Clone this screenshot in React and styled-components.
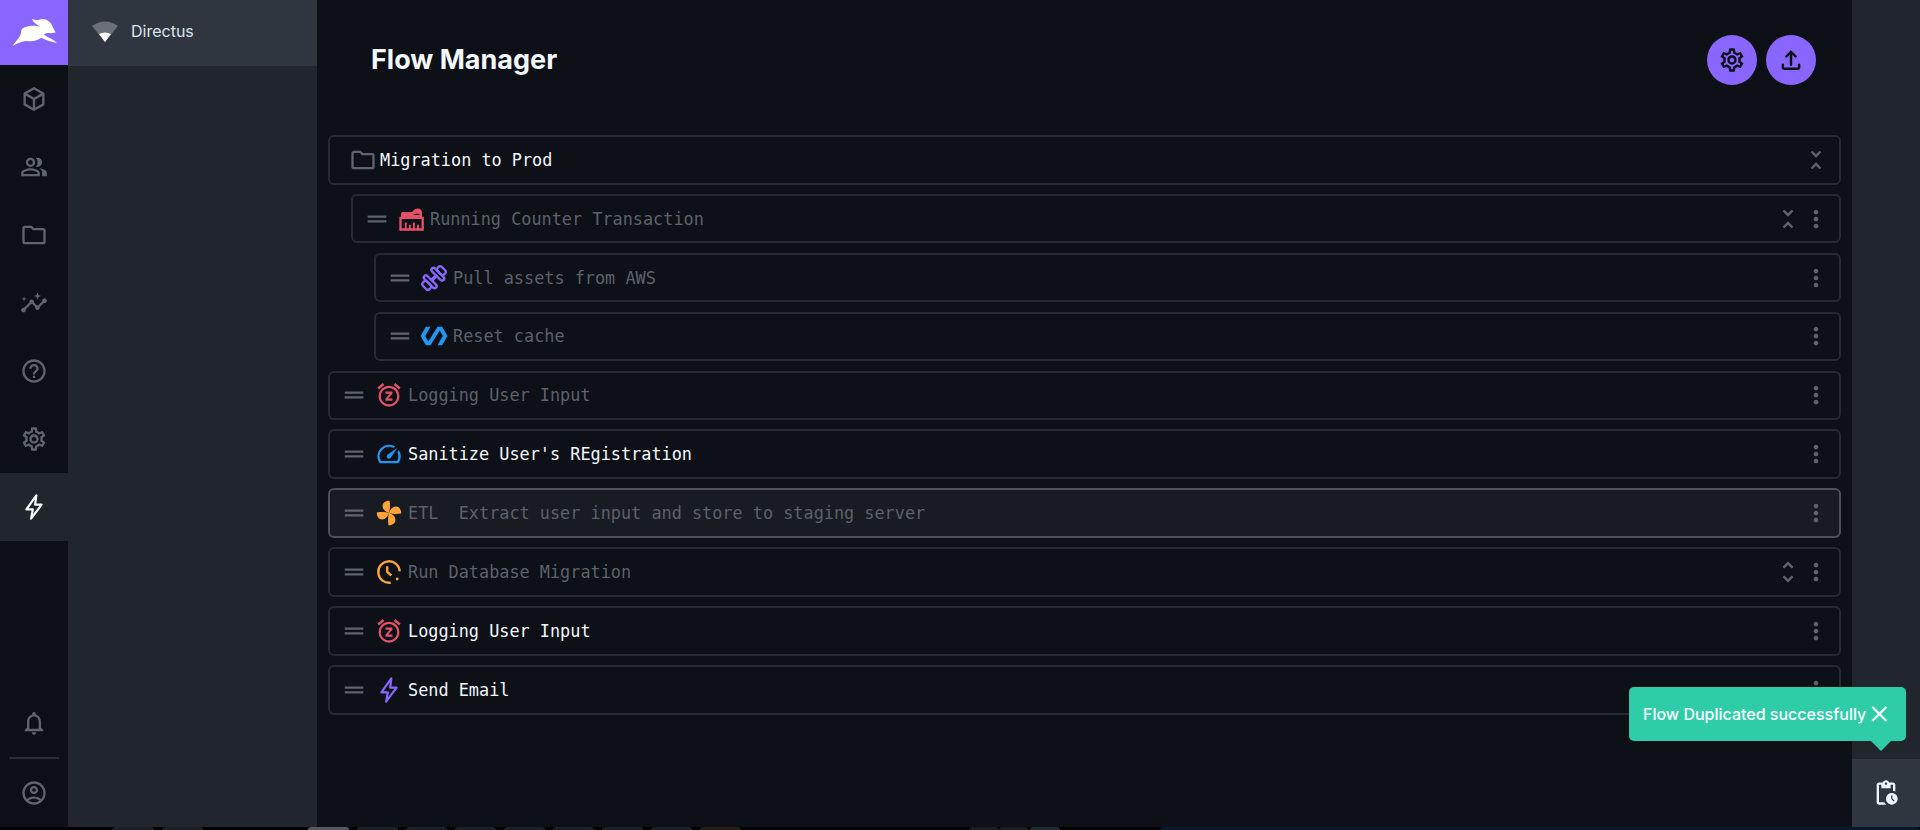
import React from "react";
import styled, { createGlobalStyle } from "styled-components";
import {
  MdOutlinePeopleAlt,
  MdOutlineFolder,
  MdInsights,
  MdHelpOutline,
  MdOutlineSettings,
  MdOutlineNotifications,
  MdOutlineAccountCircle,
  MdDragHandle,
  MdOutlineSnooze,
  MdOutlineSpeed,
  MdPolymer,
  MdUnfoldLess,
  MdUnfoldMore,
  MdMoreVert,
  MdOutlinePendingActions,
  MdClose,
} from "react-icons/md";

const GlobalStyle = createGlobalStyle`
  html, body {
    margin: 0;
    height: 100%;
    overflow: hidden;
    background: #000;
    font-family: Inter, "Noto Sans", sans-serif;
  }
  #root { height: 100%; }
`;

const Page = styled.div`
  display: flex;
  flex-direction: column;
  height: 830px;
  width: 1920px;
`;

const Shell = styled.div`
  display: flex;
  height: 827px;
  flex: none;
`;

const Rail = styled.nav`
  width: 68px;
  flex: none;
  display: flex;
  flex-direction: column;
  background: #0c0f15;
`;

const Logo = styled.div`
  height: 65px;
  background: #8866ff;
  display: flex;
  align-items: center;
  justify-content: center;
  flex: none;
`;

const RailItem = styled.div`
  height: 68px;
  flex: none;
  display: flex;
  align-items: center;
  justify-content: center;
  color: ${({ $active }) => ($active ? "#f4f8ff" : "#5f646d")};
  background: ${({ $active }) => ($active ? "#21252c" : "transparent")};
`;

const RailBottom = styled.div`
  margin-top: auto;
  display: flex;
  flex-direction: column;
`;

const RailDivider = styled.div`
  height: 2px;
  margin: 0 9px;
  background: #2a2e36;
  flex: none;
`;

const SideNav = styled.aside`
  width: 249px;
  flex: none;
  background: #21252c;
`;

const NavItem = styled.div`
  height: 66px;
  background: #30363f;
  display: flex;
  align-items: center;
  padding-left: 24px;
  gap: 13px;
  color: #dbe3ec;
  font-size: 16px;
  box-sizing: border-box;
  padding-bottom: 4px;
`;

const Main = styled.main`
  flex: 1;
  background: #0d1017;
  padding: 0 11px;
  min-width: 0;
`;

const Header = styled.header`
  height: 135px;
  display: flex;
  justify-content: space-between;
  box-sizing: border-box;
  padding: 35px 25px 0 43px;
`;

const Title = styled.h1`
  margin: 0;
  font-size: 27px;
  line-height: 50px;
  font-weight: 700;
  color: #f4f8ff;
`;

const Actions = styled.div`
  display: flex;
  gap: 9px;
`;

const RoundButton = styled.div`
  width: 50px;
  height: 50px;
  border-radius: 50%;
  background: #8866ff;
  color: #0d1017;
  display: flex;
  align-items: center;
  justify-content: center;
`;

const List = styled.div`
  display: flex;
  flex-direction: column;
  gap: 9.4px;
`;

const Row = styled.div`
  height: 49.5px;
  box-sizing: border-box;
  margin-left: ${({ $level }) => $level * 23}px;
  padding: 0 9px 0 ${({ $noHandle }) => ($noHandle ? 19 : 10)}px;
  display: flex;
  align-items: center;
  border: 2px solid ${({ $focus }) => ($focus ? "#4b5059" : "#262a32")};
  border-radius: 6px;
  background: ${({ $focus }) => ($focus ? "#181b22" : "transparent")};
`;

const Handle = styled.span`
  display: flex;
  color: #5f646d;
  margin-right: ${({ $level }) => ($level ? 6 : 7)}px;
`;

const IconBox = styled.span`
  display: flex;
  color: ${({ $color }) => $color};
  margin-right: ${({ $tight }) => ($tight ? 3 : 5)}px;
`;

const Name = styled.span`
  flex: 1;
  white-space: pre;
  font-family: "DejaVu Sans Mono", "Liberation Mono", monospace;
  font-size: 16.85px;
  color: ${({ $dim }) => ($dim ? "#5c616b" : "#f4f8ff")};
`;

const RowAction = styled.span`
  display: flex;
  color: #5f646d;
`;

const Aside = styled.aside`
  width: 68px;
  flex: none;
  background: #21252c;
  display: flex;
  flex-direction: column;
  justify-content: flex-end;
  position: relative;
`;

const AsideTile = styled.div`
  height: 68px;
  background: #30363f;
  color: #f0f6ff;
  display: flex;
  align-items: center;
  justify-content: center;
`;

const Toast = styled.div`
  position: absolute;
  right: 14px;
  bottom: 86px;
  width: 277px;
  height: 54px;
  box-sizing: border-box;
  padding: 0 13px 0 14px;
  background: #2ecda7;
  border-radius: 5px;
  color: #fff;
  font-size: 16px;
  font-weight: 500;
  display: flex;
  align-items: center;
  justify-content: space-between;
  white-space: nowrap;

  &::after {
    content: "";
    position: absolute;
    right: 15px;
    bottom: -10px;
    border-left: 10px solid transparent;
    border-right: 10px solid transparent;
    border-top: 10px solid #2ecda7;
  }
`;

const Taskbar = styled.div`
  height: 3px;
  flex: none;
  display: flex;
  background: #000;
`;

const Tab = styled.div`
  width: ${({ $w }) => $w}px;
  margin-left: ${({ $gap }) => $gap}px;
  background: ${({ $color }) => $color};
  border-radius: 3px 3px 0 0;
`;

const Rabbit = () => (
  <svg width="47" height="29" viewBox="30 52 140 88" fill="#fff">
    <path d="M33 137 L50 115 C56 108 60 100 60 90 C62 82 72 78 85 76 C95 74 108 76 118 78 C108 73 98 68 92 55 C104 58 112 60 120 55 C132 54 146 60 152 72 C156 82 160 88 164 96 L150 98 C140 96 132 98 128 102 C140 112 156 114 168 128 C150 124 132 118 120 112 C110 120 96 124 80 122 C64 122 50 128 33 137Z" />
  </svg>
);

const Wedge = () => (
  <svg width="26" height="21" viewBox="0 0 26 21">
    <path d="M0 5 Q13 -4 26 5 L13 21 Z" fill="#6b7078" />
    <path d="M7 13 Q13 10 19 13 L13 21 Z" fill="#fff" />
  </svg>
);

const Cube = () => (
  <svg width="28" height="28" viewBox="0 0 24 24" fill="none" stroke="currentColor" strokeWidth="2" strokeLinejoin="round">
    <path d="M12 2.8 20 7.4v9.2l-8 4.6-8-4.6V7.4Z" />
    <path d="M4 7.4 12 12l8-4.6M12 12v9.2" />
  </svg>
);

const Bolt = ({ size = 28 }) => (
  <svg width={size} height={size} viewBox="0 0 24 24" fill="none" stroke="currentColor" strokeWidth="1.9" strokeLinejoin="round">
    <path d="M14 2 5.5 14H11L9.5 22 18.5 10H13Z" />
  </svg>
);

const Upload = () => (
  <svg width="28" height="28" viewBox="0 0 24 24" fill="none" stroke="currentColor" strokeWidth="2.1" strokeLinecap="round" strokeLinejoin="round">
    <path d="M12 16V5M8 9l4-4 4 4" />
    <path d="M5 16v2a1.5 1.5 0 0 0 1.5 1.5h11A1.5 1.5 0 0 0 19 18v-2" />
  </svg>
);

const Counter = () => (
  <svg width="28" height="28" viewBox="0 0 24 24" fill="none" stroke="currentColor" strokeWidth="2">
    <path d="M3 11h19v10H3Z" />
    <path d="M3.5 12V7.5C3.5 6.5 4 6 5 6h8c1-2 3-3 5-3s3.5 1.5 3.5 3.5V12Z" fill="currentColor" stroke="none" />
    <path d="M14 8.5c1-1 5-1.5 5.5 0Z" fill="#0d1017" stroke="none" />
    <path d="M7.5 15v6M11 17v4M14.5 15v6M18 17v4" strokeWidth="1.6" />
  </svg>
);

const Dumbbell = () => (
  <svg width="28" height="28" viewBox="0 0 24 24" fill="none" stroke="currentColor" strokeWidth="2">
    <g transform="rotate(-45 12 12)">
      <path d="M9 12h6" strokeWidth="3" />
      <rect x="5.6" y="5" width="3.6" height="14" rx="1.8" />
      <rect x="14.8" y="5" width="3.6" height="14" rx="1.8" />
      <rect x="0.6" y="8" width="5" height="8" rx="2" />
      <rect x="18.4" y="8" width="5" height="8" rx="2" />
    </g>
  </svg>
);

const Fan = () => (
  <svg width="28" height="28" viewBox="0 0 24 24" fill="currentColor">
    {[0, 90, 180, 270].map((deg) => (
      <path
        key={deg}
        transform={`rotate(${deg} 12 12)`}
        d="M12 12C9 11 6.5 9 6.5 6 6.5 3 9.5 1.5 12.5 1.5 13 5 13 9 12 12Z"
      />
    ))}
  </svg>
);

const Pace = () => (
  <svg width="28" height="28" viewBox="0 0 24 24" fill="none" stroke="currentColor" strokeWidth="2">
    <path d="M21.2 11.5A9.2 9.2 0 1 0 13.5 21.1" />
    <path d="M10.5 7v5l3.5 3" />
    <circle cx="19" cy="18" r="1.2" fill="currentColor" stroke="none" />
  </svg>
);

const RED = "#e35169";
const BLUE = "#2196f3";
const ORANGE = "#ffa439";
const PURPLE = "#8866ff";

const flows = [
  { name: "Migration to Prod", level: 0, Icon: MdOutlineFolder, color: "#5f646d", folder: true, fold: "less" },
  { name: "Running Counter Transaction", level: 1, Icon: Counter, color: RED, dim: true, fold: "less" },
  { name: "Pull assets from AWS", level: 2, Icon: Dumbbell, color: PURPLE, dim: true },
  { name: "Reset cache", level: 2, Icon: MdPolymer, color: BLUE, dim: true },
  { name: "Logging User Input", level: 0, Icon: MdOutlineSnooze, color: RED, dim: true },
  { name: "Sanitize User's REgistration", level: 0, Icon: MdOutlineSpeed, color: BLUE },
  { name: "ETL  Extract user input and store to staging server", level: 0, Icon: Fan, color: ORANGE, dim: true, focus: true },
  { name: "Run Database Migration", level: 0, Icon: Pace, color: ORANGE, dim: true, fold: "more" },
  { name: "Logging User Input", level: 0, Icon: MdOutlineSnooze, color: RED },
  { name: "Send Email", level: 0, Icon: Bolt, color: PURPLE },
];

const railIcons = [Cube, MdOutlinePeopleAlt, MdOutlineFolder, MdInsights, MdHelpOutline, MdOutlineSettings];

const tabs = [
  { gap: 112, w: 42, color: "#1c2026" },
  { gap: 8, w: 41, color: "#1c2026" },
  { gap: 105, w: 41, color: "#55585e" },
  { gap: 8, w: 41, color: "#1a2026" },
  { gap: 8, w: 41, color: "#1a2026" },
  { gap: 8, w: 41, color: "#1a2026" },
  { gap: 8, w: 41, color: "#1a2026" },
  { gap: 8, w: 41, color: "#1a2026" },
  { gap: 8, w: 41, color: "#1a2026" },
  { gap: 8, w: 41, color: "#1a2026" },
  { gap: 8, w: 41, color: "#241d16" },
  { gap: 228, w: 29, color: "#1c1c1c" },
  { gap: 1, w: 29, color: "#1c1c1c" },
  { gap: 2, w: 30, color: "#1e2a30" },
  { gap: 100, w: 760, color: "#06182c" },
];

function App() {
  return (
    <>
      <GlobalStyle />
      <Page>
        <Shell>
          <Rail>
            <Logo>
              <Rabbit />
            </Logo>
            {railIcons.map((Icon, i) => (
              <RailItem key={i}>
                <Icon size={28} />
              </RailItem>
            ))}
            <RailItem $active>
              <Bolt />
            </RailItem>
            <RailBottom>
              <RailItem>
                <MdOutlineNotifications size={28} />
              </RailItem>
              <RailDivider />
              <RailItem>
                <MdOutlineAccountCircle size={28} />
              </RailItem>
            </RailBottom>
          </Rail>

          <SideNav>
            <NavItem>
              <Wedge />
              Directus
            </NavItem>
          </SideNav>

          <Main>
            <Header>
              <Title>Flow Manager</Title>
              <Actions>
                <RoundButton>
                  <MdOutlineSettings size={28} />
                </RoundButton>
                <RoundButton>
                  <Upload />
                </RoundButton>
              </Actions>
            </Header>
            <List>
              {flows.map((flow, i) => (
                <Row key={i} $level={flow.level} $noHandle={flow.folder} $focus={flow.focus}>
                  {!flow.folder && (
                    <Handle $level={flow.level}>
                      <MdDragHandle size={28} />
                    </Handle>
                  )}
                  <IconBox $color={flow.color} $tight={flow.folder}>
                    <flow.Icon size={28} />
                  </IconBox>
                  <Name $dim={flow.dim}>{flow.name}</Name>
                  {flow.fold && (
                    <RowAction>
                      {flow.fold === "less" ? <MdUnfoldLess size={28} /> : <MdUnfoldMore size={28} />}
                    </RowAction>
                  )}
                  {!flow.folder && (
                    <RowAction>
                      <MdMoreVert size={28} />
                    </RowAction>
                  )}
                </Row>
              ))}
            </List>
          </Main>

          <Aside>
            <Toast>
              Flow Duplicated successfully
              <MdClose size={28} />
            </Toast>
            <AsideTile>
              <MdOutlinePendingActions size={28} />
            </AsideTile>
          </Aside>
        </Shell>
        <Taskbar>
          {tabs.map((tab, i) => (
            <Tab key={i} $gap={tab.gap} $w={tab.w} $color={tab.color} />
          ))}
        </Taskbar>
      </Page>
    </>
  );
}

export default App;
